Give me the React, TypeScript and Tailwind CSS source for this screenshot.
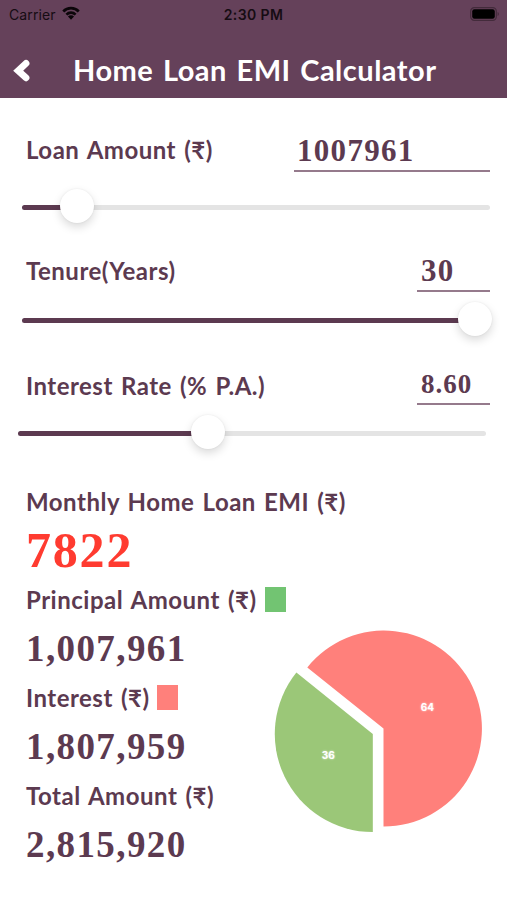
import type { ReactNode } from "react";

function StatusBar() {
  return (
    <div className="grid h-[28px] grid-cols-3 items-center pl-[9px] pr-[7px] font-['Inter','Liberation_Sans',sans-serif] text-[14px] text-[#160c13]">
      <div className="flex items-center gap-[6px]">
        <span className="tracking-[0.1px]">Carrier</span>
        <svg className="-mt-[2px]" width="18" height="14" viewBox="0 0 20 15" fill="none" stroke="#0b0509" strokeWidth="3">
          <path d="M1.4 5.8a12 12 0 0 1 17.2 0" />
          <path d="M4.9 9.3a7.2 7.2 0 0 1 10.2 0" />
          <path d="M10 15 6.6 11.4a4.8 4.8 0 0 1 6.8 0z" fill="#0b0509" stroke="none" />
        </svg>
      </div>
      <span className="-ml-[2px] text-center font-semibold tracking-[0.4px]">2:30 PM</span>
      <svg className="-mt-[1px] justify-self-end" width="30" height="14" viewBox="0 0 30 14">
        <rect x="0.7" y="0.7" width="25.6" height="12.6" rx="3.6" fill="none" stroke="#432b3b" strokeWidth="1.2" />
        <rect x="2.2" y="2.2" width="22.6" height="9.6" rx="2.2" fill="#000" />
        <path d="M27.6 5v4a2.2 2.2 0 0 0 0-4z" fill="#432b3b" />
      </svg>
    </div>
  );
}

function Label({ children, className = "" }: { children: ReactNode; className?: string }) {
  return (
    <span className={`whitespace-nowrap font-['Lato','Noto_Sans',sans-serif] text-[24px] font-bold leading-[30px] tracking-[0.5px] [word-spacing:1.8px] ${className}`}>
      {children}
    </span>
  );
}

function Slider({ percent, className = "" }: { percent: number; className?: string }) {
  return (
    <div className={`relative h-[5px] w-[468px] rounded-full bg-[#e4e4e4] ${className}`}>
      <div className="h-full rounded-full bg-[#5c3a50]" style={{ width: `${percent}%` }} />
      <div
        className="absolute top-[-16px] size-[34px] -translate-x-1/2 rounded-full bg-white shadow-[0_4px_10px_rgba(0,0,0,0.15),0_0_2px_rgba(0,0,0,0.08)]"
        style={{ left: `${percent}%` }}
      />
    </div>
  );
}

function Amount({ children }: { children: ReactNode }) {
  return (
    <div className="h-[49px] font-['Liberation_Serif',serif] text-[37px] font-bold leading-[49px] tracking-[1.4px]">
      {children}
    </div>
  );
}

// Both slices share a radius; each one is pulled away from the common centre.
function PieChart() {
  return (
    <svg className="shrink-0" width="210" height="204" viewBox="273 629 210 204">
      <path d="M383.5 728.5V826.5A98 98 0 1 0 307.3 667.4Z" fill="#ff807b" />
      <path d="M372.8 734V832A98 98 0 0 1 296.4 672.6Z" fill="#9bc778" />
      <g
        className="font-['Inter','Liberation_Sans',sans-serif] text-[10px] font-bold [text-shadow:0_0_2px_rgba(255,255,255,0.8)]"
        fill="#fff"
        textAnchor="middle"
      >
        <text x="427.3" y="711">64</text>
        <text x="328.3" y="758.5">36</text>
      </g>
    </svg>
  );
}

export default function App() {
  return (
    <main className="h-[900px] w-[507px] overflow-hidden bg-white text-[#5c3a50]">
      <header className="h-[98px] bg-[#65415a]">
        <StatusBar />
        <div className="flex h-[70px] items-center pb-[1px] pl-[13px] pt-[15px] text-white">
          <svg width="18" height="24" viewBox="0 0 18 24" fill="none" stroke="#fff" strokeWidth="6.8" strokeLinecap="round">
            <path d="M13 5.4 5.2 12.8l7.8 7" />
          </svg>
          <h1 className="ml-[42px] whitespace-nowrap font-['Lato',sans-serif] text-[29px] font-bold leading-[36px] tracking-[0.5px] [word-spacing:2px]">
            Home Loan EMI Calculator
          </h1>
        </div>
      </header>

      <section className="h-[379px] pr-[17px]">
        <div className="flex h-[74px] items-end justify-between pl-[26px]">
          <Label className="mb-[7px]">Loan Amount (₹)</Label>
          <div className="h-[39px] w-[196px] border-b-2 border-[#957a8c] pl-[3px] font-['Liberation_Serif',serif] text-[31px] font-bold leading-[36px] tracking-[1.3px]">
            1007961
          </div>
        </div>
        <Slider percent={11.8} className="ml-[22px] mt-[33px]" />

        <div className="flex h-[82px] items-end justify-between pl-[26px]">
          <Label className="mb-[6px]">Tenure(Years)</Label>
          <div className="h-[39px] w-[73px] border-b-2 border-[#957a8c] pl-[4px] font-['Liberation_Serif',serif] text-[31px] font-bold leading-[36px] tracking-[1.3px]">
            30
          </div>
        </div>
        <Slider percent={96.8} className="ml-[22px] mt-[26px]" />

        <div className="flex h-[82px] items-end justify-between pl-[26px]">
          <Label className="mb-[4px]">Interest Rate (% P.A.)</Label>
          <div className="h-[39px] w-[73px] border-b-2 border-[#957a8c] pl-[4px] font-['Liberation_Serif',serif] text-[27px] font-bold leading-[36px] tracking-[1px]">
            8.60
          </div>
        </div>
        <Slider percent={40.6} className="ml-[18px] mt-[26px]" />
      </section>

      <section className="pl-[26px] pt-[10px]">
        <Label className="block">Monthly Home Loan EMI (₹)</Label>
        <div className="h-[58px] font-['Liberation_Serif',serif] text-[50px] font-bold leading-[67px] tracking-[1.8px] text-[#ff3b30]">
          7822
        </div>
        <div className="flex">
          <div className="w-[247px] shrink-0">
            <div className="flex h-[49px] items-center gap-[8px]">
              <Label>Principal Amount (₹)</Label>
              <span className="-mt-[1px] h-[25px] w-[21px] shrink-0 bg-[#72c472]" />
            </div>
            <Amount>1,007,961</Amount>
            <div className="flex h-[49px] items-center gap-[7px]">
              <Label>Interest (₹)</Label>
              <span className="-mt-[1px] h-[25px] w-[21px] shrink-0 bg-[#ff807b]" />
            </div>
            <Amount>1,807,959</Amount>
            <div className="flex h-[49px] items-center">
              <Label>Total Amount (₹)</Label>
            </div>
            <Amount>2,815,920</Amount>
          </div>
          <div className="pt-[54px]">
            <PieChart />
          </div>
        </div>
      </section>
    </main>
  );
}
